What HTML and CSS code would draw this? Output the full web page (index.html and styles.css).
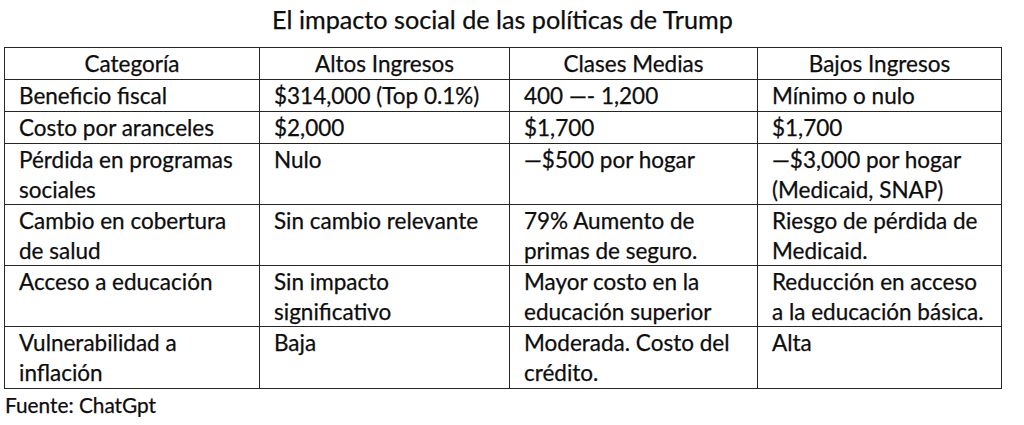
FILE: index.html
```html
<!DOCTYPE html>
<html lang="es">
<head>
<meta charset="utf-8">
<title>El impacto social de las políticas de Trump</title>
<link rel="stylesheet" href="styles.css">
</head>
<body>
<div class="page">
  <h1 class="title">El impacto social de las políticas de Trump</h1>
  <table class="impact">
    <colgroup>
      <col class="c1"><col class="c2"><col class="c3"><col class="c4">
    </colgroup>
    <thead>
      <tr class="single">
        <th>Categoría</th>
        <th>Altos Ingresos</th>
        <th>Clases Medias</th>
        <th>Bajos Ingresos</th>
      </tr>
    </thead>
    <tbody>
      <tr class="single">
        <td>Beneficio fiscal</td>
        <td>$314,000 (Top 0.1%)</td>
        <td>400 —- 1,200</td>
        <td>Mínimo o nulo</td>
      </tr>
      <tr class="single">
        <td>Costo por aranceles</td>
        <td>$2,000</td>
        <td>$1,700</td>
        <td>$1,700</td>
      </tr>
      <tr class="double">
        <td>Pérdida en programas<br>sociales</td>
        <td>Nulo</td>
        <td>—$500 por hogar</td>
        <td>—$3,000 por hogar<br>(Medicaid, SNAP)</td>
      </tr>
      <tr class="double">
        <td>Cambio en cobertura<br>de salud</td>
        <td>Sin cambio relevante</td>
        <td>79% Aumento de<br>primas de seguro.</td>
        <td>Riesgo de pérdida de<br>Medicaid.</td>
      </tr>
      <tr class="double">
        <td>Acceso a educación</td>
        <td>Sin impacto<br>significativo</td>
        <td>Mayor costo en la<br>educación superior</td>
        <td>Reducción en acceso<br>a la educación básica.</td>
      </tr>
      <tr class="double last">
        <td>Vulnerabilidad a<br>inflación</td>
        <td>Baja</td>
        <td>Moderada. Costo del<br>crédito.</td>
        <td>Alta</td>
      </tr>
    </tbody>
  </table>
  <p class="source">Fuente: ChatGpt</p>
</div>
</body>
</html>
```

FILE: styles.css
```css
html, body {
  margin: 0;
  padding: 0;
  background: #ffffff;
}

body {
  font-family: Lato, "Liberation Sans", sans-serif;
  color: #0d0d0d;
  -webkit-text-stroke: 0.25px #0d0d0d;
}

.page {
  width: 997px;
  padding: 4px 0 0 4px;
}

.title {
  margin: 0;
  height: 43px;
  font-size: 25.2px;
  font-weight: 400;
  line-height: 30px;
  text-align: center;
}

.impact {
  width: 997px;
  border-collapse: collapse;
  table-layout: fixed;
  font-size: 22.5px;
  line-height: 29.5px;
}

.c1 { width: 255px; }
.c2 { width: 250px; }
.c3 { width: 248px; }
.c4 { width: 244px; }

.impact th,
.impact td {
  border: 1.5px solid #262626;
  padding: 1px 0 0 14px;
  vertical-align: top;
  text-align: left;
  white-space: nowrap;
  font-weight: 400;
}

.impact th {
  text-align: center;
  padding-left: 0;
}

.single {
  height: 32px;
}

.double {
  height: 60.5px;
}

.last {
  height: 61.5px;
}

.source {
  margin: 4px 0 0 1px;
  font-size: 20.8px;
  line-height: 24px;
}
```
